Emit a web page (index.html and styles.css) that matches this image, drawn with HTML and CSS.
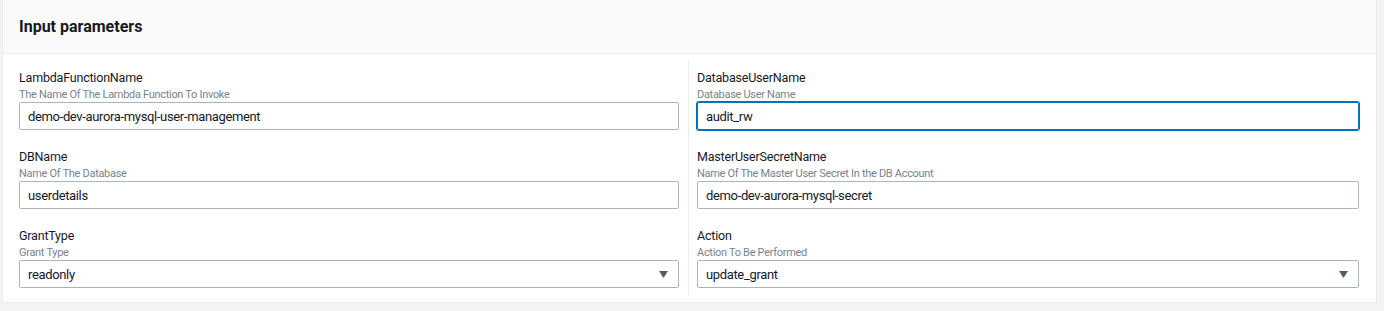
FILE: index.html
```html
<!DOCTYPE html>
<html>
<head>
    <title>Input parameters</title>
    <link rel="stylesheet" href="styles.css">
</head>
<body>
    <div class="panel">
        <div class="panel-header">
            <h2>Input parameters</h2>
        </div>

        <div class="panel-body">
            <div class="column">
                <div class="field">
                    <div class="field-label">LambdaFunctionName</div>
                    <div class="field-desc">The Name Of The Lambda Function To Invoke</div>
                    <div class="text-input">demo-dev-aurora-mysql-user-management</div>
                </div>
                <div class="field">
                    <div class="field-label">DBName</div>
                    <div class="field-desc">Name Of The Database</div>
                    <div class="text-input">userdetails</div>
                </div>
                <div class="field">
                    <div class="field-label">GrantType</div>
                    <div class="field-desc">Grant Type</div>
                    <div class="text-input select">
                        <span>readonly</span>
                        <svg class="caret" width="9" height="7" viewBox="0 0 9 7"><path d="M0 0 H9 L4.5 7 Z" fill="#545b64"/></svg>
                    </div>
                </div>
            </div>

            <div class="column column-right">
                <div class="field">
                    <div class="field-label">DatabaseUserName</div>
                    <div class="field-desc">Database User Name</div>
                    <div class="text-input focused">audit_rw</div>
                </div>
                <div class="field">
                    <div class="field-label">MasterUserSecretName</div>
                    <div class="field-desc">Name Of The Master User Secret In the DB Account</div>
                    <div class="text-input">demo-dev-aurora-mysql-secret</div>
                </div>
                <div class="field">
                    <div class="field-label">Action</div>
                    <div class="field-desc">Action To Be Performed</div>
                    <div class="text-input select">
                        <span>update_grant</span>
                        <svg class="caret" width="9" height="7" viewBox="0 0 9 7"><path d="M0 0 H9 L4.5 7 Z" fill="#545b64"/></svg>
                    </div>
                </div>
            </div>
        </div>
    </div>
</body>
</html>
```

FILE: styles.css
```css
body {
    margin: 0;
    background: #f2f3f3;
    color: #16191f;
    font-family: Roboto, "Liberation Sans", sans-serif;
}

.panel {
    width: 1373px;
    margin-left: 2px;
    background: #fff;
    border: 1px solid #eaeded;
    border-top: none;
}

.panel-header {
    height: 53px;
    background: #fafafa;
    border-bottom: 1px solid #eaeded;
    display: flex;
    align-items: center;
    padding-left: 16px;
}

.panel-header h2 {
    margin: 0 0 1px 0;
    font-size: 16px;
    font-weight: 700;
}

.panel-body {
    display: flex;
    padding: 6px 16px 7px 16px;
}

.column {
    display: flex;
    flex-direction: column;
    gap: 17px;
    padding: 8px 0 7px 0;
    width: 660px;
    margin-right: 9px;
}

.column-right {
    width: 662px;
    margin-right: 0;
    border-left: 1px solid #eaeded;
    padding-left: 8px;
}

.field-label {
    font-size: 12.5px;
    line-height: 19px;
    letter-spacing: -0.2px;
}

.field-desc {
    font-size: 11px;
    line-height: 15px;
    letter-spacing: -0.3px;
    color: #79838b;
}

.text-input {
    box-sizing: border-box;
    height: 28px;
    border: 1px solid #aab7b8;
    border-radius: 2px;
    padding: 0 8px;
    display: flex;
    align-items: center;
    font-size: 13px;
    letter-spacing: -0.35px;
}

.text-input.focused {
    border-color: #0073bb;
    box-shadow: 0 0 0 1px #0073bb;
}

.select {
    justify-content: space-between;
    padding-right: 10px;
}

.caret {
    display: block;
}
```
